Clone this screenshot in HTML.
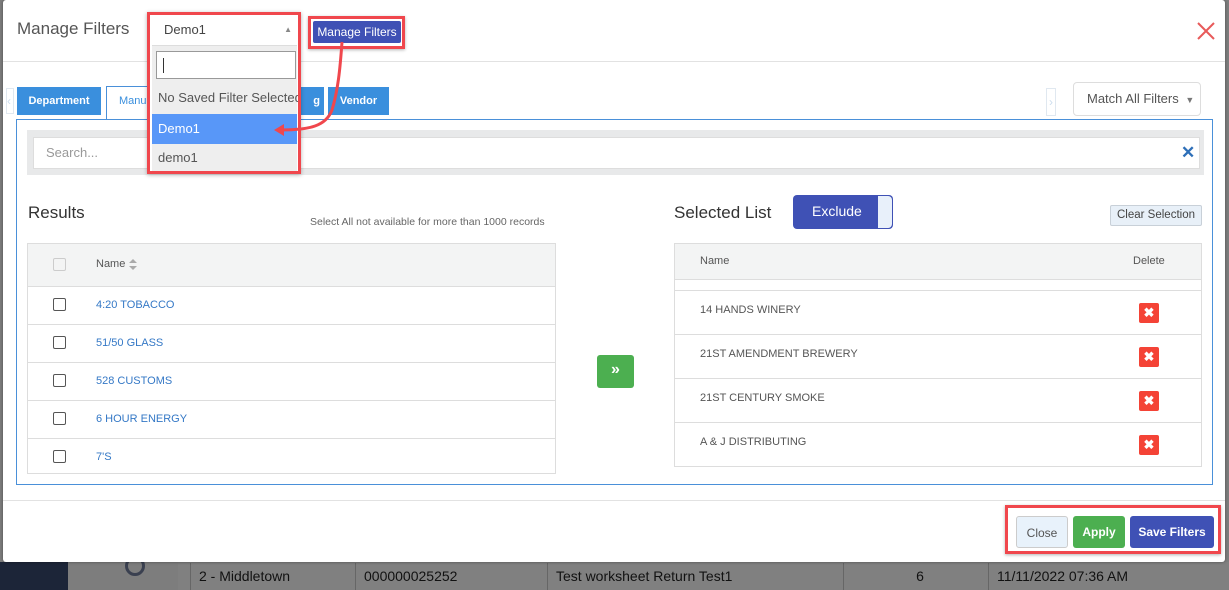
<!DOCTYPE html>
<html><head><style>
*{box-sizing:border-box;margin:0;padding:0}
body{width:1229px;height:590px;overflow:hidden;position:relative;font-family:"Liberation Sans",sans-serif;background:#7d7d7d}
.a{position:absolute}
.bgrow{position:absolute;top:563px;height:27px;border-left:1px solid #666;color:#111;font-size:14px;line-height:27px;padding-left:8px}
.modal{position:absolute;left:3px;top:0;width:1222px;height:562px;background:#fff;border-radius:3px;box-shadow:0 0 3px rgba(0,0,0,.4)}
.tab{position:absolute;top:87px;height:28px;background:#3a8fdd;color:#fff;font-size:11px;font-weight:bold;line-height:28px;text-align:center}
.row{position:absolute;left:27px;width:529px;height:38px;border-top:1px solid #ddd}
.cb{position:absolute;left:26px;top:11px;width:13px;height:13px;border:1px solid #555;border-radius:2px}
.row span{position:absolute;left:69px;top:12px;font-size:11px;color:#3478c6}
.rrow{position:absolute;left:674px;width:528px;height:44px;border-top:1px solid #ddd}
.rrow span{position:absolute;left:26px;top:13px;font-size:11px;color:#555}
.del{position:absolute;left:465px;top:12px;width:20px;height:20px;background:#f44336;border-radius:2px;color:#fff;font-size:13px;font-weight:bold;text-align:center;line-height:20px}
.btn{position:absolute;top:516px;height:32px;border-radius:3px;font-size:12px;line-height:32px;text-align:center}
</style></head><body>
<div class="a" style="left:0;top:562px;width:68px;height:28px;background:#1c2538"></div>
<div class="a" style="left:125px;top:556px;width:20px;height:20px;border-radius:50%;border:3px solid #3a4050"></div>
<div class="a" style="left:178px;top:562px;width:1051px;height:28px;background:#808080"></div>
<div class="bgrow" style="left:190px;width:165px">2 - Middletown</div>
<div class="bgrow" style="left:355px;width:192px">000000025252</div>
<div class="bgrow" style="left:547px;width:296px">Test worksheet Return Test1</div>
<div class="bgrow" style="left:843px;width:145px;text-align:center">6</div>
<div class="bgrow" style="left:988px;width:241px">11/11/2022 07:36 AM</div>

<div class="modal"></div>
<div class="a" style="left:17px;top:19px;font-size:17px;color:#555">Manage Filters</div>
<svg class="a" style="left:1197px;top:22px" width="18" height="18" viewBox="0 0 18 18"><path d="M1 1L17 17M17 1L1 17" stroke="#e85a5a" stroke-width="2"/></svg>
<div class="a" style="left:3px;top:61px;width:1222px;height:1px;background:#e2e2e2"></div>

<!-- tabs -->
<div class="a" style="left:6px;top:88px;width:8px;height:26px;border:1px solid #e0e8f0;color:#cde;font-size:12px;line-height:24px">‹</div>
<div class="tab" style="left:17px;width:84px">Department</div>
<div class="a" style="left:106px;top:86px;width:60px;height:34px;background:#fff;border:1px solid #4a90d9;border-bottom:none;font-size:11px;color:#3a8fdd;padding:8px 0 0 12px">Manu</div>
<div class="tab" style="left:280px;width:44px;text-align:right;padding-right:4px">g</div>
<div class="tab" style="left:328px;width:61px">Vendor</div>
<div class="a" style="left:1046px;top:88px;width:10px;height:28px;border:1px solid #e0e8f0;color:#cde;font-size:12px;line-height:26px;text-align:center">›</div>
<div class="a" style="left:1073px;top:82px;width:128px;height:34px;border:1px solid #ddd;border-radius:4px;font-size:13px;color:#555;line-height:32px;padding-left:13px">Match All Filters <span style="font-size:9px;color:#777;margin-left:3px">▼</span></div>

<!-- main panel -->
<div class="a" style="left:16px;top:119px;width:1197px;height:366px;border:1px solid #4a90d9"></div>
<div class="a" style="left:27px;top:130px;width:1177px;height:45px;background:#e8e9ea"></div>
<div class="a" style="left:33px;top:137px;width:1167px;height:32px;background:#fff;border:1px solid #ddd;font-size:13px;color:#999;line-height:30px;padding-left:12px">Search...</div>
<div class="a" style="left:1181px;top:143px;font-size:17px;color:#2e6fb8;font-weight:bold">✕</div>

<div class="a" style="left:28px;top:203px;font-size:17px;color:#333">Results</div>
<div class="a" style="left:310px;top:216px;font-size:10.5px;color:#666">Select All not available for more than 1000 records</div>
<div class="a" style="left:27px;top:243px;width:529px;height:231px;border:1px solid #ddd"></div>
<div class="a" style="left:28px;top:244px;width:527px;height:42px;background:#f3f4f4"></div>
<div class="a" style="left:53px;top:258px;width:13px;height:13px;border:1px solid #ccc;border-radius:2px"></div>
<div class="a" style="left:96px;top:258px;font-size:11px;color:#555">Name</div>
<svg class="a" style="left:129px;top:259px" width="8" height="11" viewBox="0 0 8 11"><path d="M4 0L8 4H0Z M4 11L8 7H0Z" fill="#aaa"/></svg>
<div class="row" style="top:286px"><div class="cb"></div><span>4:20 TOBACCO</span></div>
<div class="row" style="top:324px"><div class="cb"></div><span>51/50 GLASS</span></div>
<div class="row" style="top:362px"><div class="cb"></div><span>528 CUSTOMS</span></div>
<div class="row" style="top:400px"><div class="cb"></div><span>6 HOUR ENERGY</span></div>
<div class="row" style="top:438px;height:36px"><div class="cb"></div><span>7'S</span></div>

<div class="a" style="left:597px;top:355px;width:37px;height:33px;background:#4caf50;border-radius:3px;color:#fff;font-weight:bold;font-size:16px;text-align:center;line-height:30px">»</div>

<div class="a" style="left:674px;top:203px;font-size:17px;color:#333">Selected List</div>
<div class="a" style="left:793px;top:195px;width:100px;height:34px;background:#3f51b5;border-radius:4px;color:#fff;font-size:14px;line-height:32px;padding-left:19px">Exclude</div>
<div class="a" style="left:878px;top:196px;width:14px;height:32px;background:#e8f0fa;border-radius:0 4px 4px 0"></div>
<div class="a" style="left:1110px;top:205px;width:92px;height:21px;background:#e8f0f8;border:1px solid #c8d0d8;border-radius:2px;font-size:11.5px;color:#444;text-align:center;line-height:19px">Clear Selection</div>
<div class="a" style="left:674px;top:243px;width:528px;height:224px;border:1px solid #ddd"></div>
<div class="a" style="left:675px;top:244px;width:526px;height:36px;background:#f3f4f4;border-bottom:1px solid #ddd"></div>
<div class="a" style="left:700px;top:255px;font-size:11px;color:#555">Name</div>
<div class="a" style="left:1133px;top:255px;font-size:11px;color:#555">Delete</div>
<div class="rrow" style="top:290px"><span>14 HANDS WINERY</span><div class="del">✖</div></div>
<div class="rrow" style="top:334px"><span>21ST AMENDMENT BREWERY</span><div class="del">✖</div></div>
<div class="rrow" style="top:378px"><span>21ST CENTURY SMOKE</span><div class="del">✖</div></div>
<div class="rrow" style="top:422px"><span>A &amp; J DISTRIBUTING</span><div class="del">✖</div></div>

<!-- footer -->
<div class="a" style="left:3px;top:500px;width:1222px;height:1px;background:#e2e2e2"></div>
<div class="a" style="left:1005px;top:505px;width:216px;height:49px;border:3px solid #f0474d;box-shadow:0 1px 3px rgba(0,0,0,.3)"></div>
<div class="btn" style="left:1016px;width:52px;background:#e8f2fb;border:1px solid #ccc;color:#555">Close</div>
<div class="btn" style="left:1073px;width:52px;background:#4caf50;color:#fff;font-weight:bold">Apply</div>
<div class="btn" style="left:1130px;width:84px;background:#3f51b5;color:#fff;font-weight:bold">Save Filters</div>

<!-- dropdown -->
<div class="a" style="left:147px;top:12px;width:154px;height:162px;border:3px solid #f0474d;background:#fff;box-shadow:0 1px 4px rgba(0,0,0,.3)"></div>
<div class="a" style="left:152px;top:15px;width:145px;height:31px;border-bottom:1px solid #ddd;font-size:13px;color:#444;line-height:30px;padding-left:12px">Demo1<span style="position:absolute;right:5px;font-size:8px;color:#888">▲</span></div>
<div class="a" style="left:152px;top:46px;width:145px;height:68px;background:#eee"></div>
<div class="a" style="left:156px;top:51px;width:140px;height:28px;background:#fff;border:1px solid #999"><div style="position:absolute;left:6px;top:6px;width:1px;height:15px;background:#333"></div></div>
<div class="a" style="left:158px;top:90px;font-size:13px;color:#555;white-space:nowrap;width:140px;overflow:hidden">No Saved Filter Selected</div>
<div class="a" style="left:152px;top:114px;width:145px;height:30px;background:#5897f8;color:#fff;font-size:13px;line-height:30px;padding-left:6px">Demo1</div>
<div class="a" style="left:152px;top:144px;width:145px;height:27px;background:#eee;color:#555;font-size:13px;line-height:27px;padding-left:6px">demo1</div>

<div class="a" style="left:308px;top:16px;width:97px;height:33px;border:3px solid #f0474d;box-shadow:0 1px 3px rgba(0,0,0,.3)"></div>
<div class="a" style="left:313px;top:21px;width:88px;height:22px;background:#3f51b5;border-radius:2px;color:#fff;font-size:12px;line-height:22px;text-align:center">Manage Filters</div>

<svg class="a" style="left:270px;top:40px" width="80" height="100" viewBox="0 0 80 100">
<path d="M72 2 C70 30 68 50 62 70 C56 86 40 90 10 90" fill="none" stroke="#f0474d" stroke-width="3"/>
<path d="M4 90 L14 84 L14 96 Z" fill="#f0474d"/>
</svg>
</body></html>
